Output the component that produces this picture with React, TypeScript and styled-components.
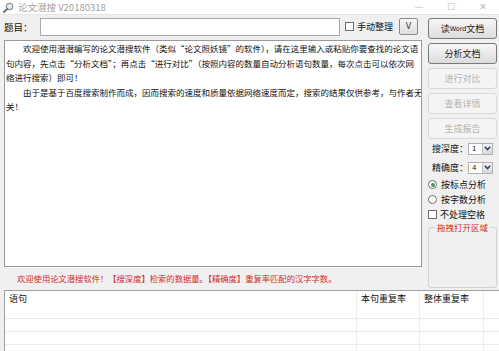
import React from 'react'
import styled, { createGlobalStyle } from 'styled-components'

const GlobalStyle = createGlobalStyle`
    html, body {
        margin: 0;
        padding: 0;
        background: #f0f0f0;
    }
    * {
        box-sizing: border-box;
    }
`

const cjk = `"Noto Sans CJK SC", "Noto Sans", sans-serif`

const SWindow = styled.div`
    width: 499px;
    height: 351px;
    overflow: hidden;
    background-color: #f0f0f0;
    font-family: ${cjk};
    font-size: 8.5px;
    color: #111;
    display: flex;
    flex-direction: column;
`

const STitleBar = styled.div`
    height: 15px;
    background-color: #ffffff;
    display: flex;
    align-items: center;
    padding-left: 3px;
    border-bottom: 1px solid #e4e4e4;
`

const STitleText = styled.span`
    margin-left: 4px;
    color: #a0a0a0;
    font-size: 9.5px;
    flex: 1;
`

const SWinCtrl = styled.span`
    width: 32px;
    text-align: center;
    color: #b8b8b8;
    font-family: "DejaVu Sans", sans-serif;
    font-size: 9px;
`

const SBody = styled.div`
    display: grid;
    grid-template-columns: 418px 69px;
    column-gap: 6px;
    padding: 2px 2px 0 4px;
`

const SLeft = styled.div`
    display: flex;
    flex-direction: column;
`

const STopRow = styled.div`
    height: 19px;
    display: flex;
    align-items: center;
`

const SLabel = styled.span`
    width: 36px;
    font-size: 9.5px;
`

const SInput = styled.div`
    width: 300px;
    height: 18px;
    background: #fff;
    border: 1px solid #a9a9a9;
`

const SCheck = styled.span`
    display: inline-block;
    width: 9px;
    height: 9px;
    border: 1px solid #6f6f6f;
    background: #fff;
    margin-right: 3px;
    flex-shrink: 0;
`

const SCheckLabel = styled.label`
    display: flex;
    align-items: center;
    margin-left: 5px;
    font-size: 9px;
    white-space: nowrap;
`

const SSmallButton = styled.div`
    width: 19px;
    height: 17px;
    margin-left: 6px;
    border: 1px solid #8a8a8a;
    border-radius: 2px;
    background: linear-gradient(#f6f6f6, #dedede);
    display: flex;
    align-items: center;
    justify-content: center;
    font-family: "DejaVu Sans", sans-serif;
    font-size: 8px;
    color: #333;
`

const SEditor = styled.div`
    margin-top: 4px;
    height: 227px;
    background: #fff;
    border: 1px solid #9a9a9a;
    padding: 0 1px;
    overflow: hidden;
`

const SPara = styled.p`
    margin: 0;
    text-indent: 2em;
    line-height: 14.5px;
    white-space: nowrap;
`

const SStatus = styled.div`
    flex: 1;
    display: flex;
    align-items: center;
    padding-left: 13px;
    color: #d42a2a;
    font-size: 8.3px;
    white-space: nowrap;
`

const SSide = styled.div`
    display: flex;
    flex-direction: column;
`

const SButtonStack = styled.div`
    display: flex;
    flex-direction: column;
    gap: 4px;
    margin-top: 1px;
`

const SButton = styled.div<{ $disabled?: boolean }>`
    height: 21px;
    border: 1px solid ${p => (p.$disabled ? '#d8d8d8' : '#7a7a7a')};
    border-radius: 3px;
    background: ${p => (p.$disabled ? '#f4f4f4' : 'linear-gradient(#f7f7f7, #dcdcdc)')};
    color: ${p => (p.$disabled ? '#b4b4b4' : '#222')};
    display: flex;
    align-items: center;
    justify-content: center;
    font-size: 9px;
`

const SWord = styled.span`
    font-family: "DejaVu Sans", sans-serif;
    font-size: 6.5px;
`

const SSelectRow = styled.div`
    height: 19px;
    display: flex;
    align-items: center;
    padding-left: 4px;
    font-size: 9px;
    white-space: nowrap;
`

const SSelect = styled.div`
    margin-left: auto;
    margin-right: 4px;
    width: 27px;
    height: 12px;
    background: #fff;
    border: 1px solid #b0b0b0;
    display: flex;
    align-items: center;
    justify-content: space-between;
    padding-left: 3px;
    font-family: "DejaVu Sans", sans-serif;
    font-size: 7px;
`

const SArrow = styled.span`
    width: 10px;
    height: 10px;
    background: linear-gradient(#f2f2f2, #d8d8d8);
    border-left: 1px solid #c4c4c4;
    display: flex;
    align-items: center;
    justify-content: center;
`

const SOption = styled.div`
    height: 15px;
    display: flex;
    align-items: center;
    font-size: 9px;
    white-space: nowrap;
`

const SRadio = styled.span<{ $on?: boolean }>`
    width: 9px;
    height: 9px;
    border-radius: 50%;
    border: 1px solid #6f6f6f;
    background: #fff;
    margin-right: 4px;
    display: flex;
    align-items: center;
    justify-content: center;
    &::after {
        content: '';
        width: 4px;
        height: 4px;
        border-radius: 50%;
        background: ${p => (p.$on ? '#3f9a64' : 'transparent')};
    }
`

const SDropBox = styled.fieldset`
    margin: 0;
    height: 66px;
    border: 1px solid #d2d2d2;
    border-radius: 3px;
    padding: 0;
`

const SDropLegend = styled.legend`
    margin: 0 auto;
    padding: 0 2px;
    color: #d42a2a;
    font-size: 8.5px;
    line-height: 10px;
`

const STable = styled.div`
    margin: 2px 0 0 4px;
    flex: 1;
    background: #fff;
    border-top: 1px solid #a0a0a0;
    border-left: 1px solid #a0a0a0;
`

const SRow = styled.div<{ $head?: boolean }>`
    display: grid;
    grid-template-columns: 352px 63px 64px 20px;
    height: ${p => (p.$head ? '15px' : '13px')};
    border-bottom: 1px solid ${p => (p.$head ? '#ffffff' : '#ececec')};
`

const SCell = styled.div`
    border-right: 1px solid #ececec;
    padding-left: 4px;
    font-size: 9px;
    line-height: 16px;
    white-space: nowrap;
`

const MagnifierIcon = () => (
    <svg width="11" height="11" viewBox="0 0 11 11">
        <circle cx="6.5" cy="4.5" r="3.2" fill="#e6eef6" stroke="#8a96a4" strokeWidth="1.2" />
        <line x1="4.2" y1="6.8" x2="1" y2="10" stroke="#6a6a6a" strokeWidth="1.8" strokeLinecap="round" />
    </svg>
)

const Chevron = () => (
    <svg width="7" height="5" viewBox="0 0 7 5">
        <path d="M0.8 0.8 L3.5 3.6 L6.2 0.8" fill="none" stroke="#2a3f6a" strokeWidth="1.5" />
    </svg>
)

const emptyRows = [1, 2, 3, 4]

export default function App() {
    return (
        <>
            <GlobalStyle />
            <SWindow>
                <STitleBar>
                    <MagnifierIcon />
                    <STitleText>论文潜搜 V20180318</STitleText>
                    <SWinCtrl>—</SWinCtrl>
                    <SWinCtrl>☐</SWinCtrl>
                    <SWinCtrl>✕</SWinCtrl>
                </STitleBar>

                <SBody>
                    <SLeft>
                        <STopRow>
                            <SLabel>题目：</SLabel>
                            <SInput />
                            <SCheckLabel>
                                <SCheck />
                                手动整理
                            </SCheckLabel>
                            <SSmallButton>V</SSmallButton>
                        </STopRow>

                        <SEditor>
                            <SPara>
                                欢迎使用潜潜编写的论文潜搜软件（类似“论文照妖镜”的软件），请在这里输入或粘贴你要查找的论文语
                                <br />
                                句内容，先点击“分析文档”；再点击“进行对比”（按照内容的数量自动分析语句数量，每次点击可以依次网
                                <br />
                                络进行搜索）即可！
                            </SPara>
                            <SPara>
                                由于是基于百度搜索制作而成，因而搜索的速度和质量依据网络速度而定，搜索的结果仅供参考，与作者无
                                <br />
                                关！
                            </SPara>
                        </SEditor>

                        <SStatus>欢迎使用论文潜搜软件！【搜深度】检索的数据量。【精确度】重复率匹配的汉字字数。</SStatus>
                    </SLeft>

                    <SSide>
                        <SButtonStack>
                            <SButton>读<SWord>Word</SWord>文档</SButton>
                            <SButton>分析文档</SButton>
                            <SButton $disabled>进行对比</SButton>
                            <SButton $disabled>查看详情</SButton>
                            <SButton $disabled>生成报告</SButton>
                        </SButtonStack>

                        <SSelectRow>
                            搜深度：
                            <SSelect>1<SArrow><Chevron /></SArrow></SSelect>
                        </SSelectRow>
                        <SSelectRow>
                            精确度：
                            <SSelect>4<SArrow><Chevron /></SArrow></SSelect>
                        </SSelectRow>

                        <SOption><SRadio $on />按标点分析</SOption>
                        <SOption><SRadio />按字数分析</SOption>
                        <SOption><SCheck />不处理空格</SOption>

                        <SDropBox>
                            <SDropLegend>拖拽打开区域</SDropLegend>
                        </SDropBox>
                    </SSide>
                </SBody>

                <STable>
                    <SRow $head>
                        <SCell>语句</SCell>
                        <SCell>本句重复率</SCell>
                        <SCell>整体重复率</SCell>
                        <SCell />
                    </SRow>
                    {emptyRows.map(r => (
                        <SRow key={r}><SCell /><SCell /><SCell /><SCell /></SRow>
                    ))}
                </STable>
            </SWindow>
        </>
    )
}
